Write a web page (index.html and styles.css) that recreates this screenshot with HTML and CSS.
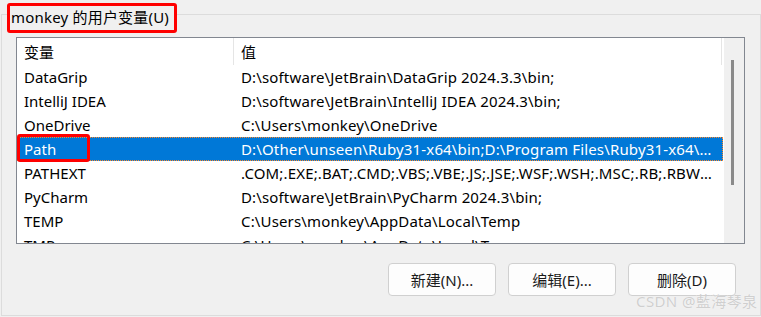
FILE: index.html
```html
<!DOCTYPE html>
<html lang="zh-CN">
<head>
  <meta charset="UTF-8">
  <title>环境变量</title>
  <link rel="stylesheet" href="styles.css">
</head>
<body>
  <div class="group">
    <div class="group-title">monkey 的用户变量(U)</div>

    <div class="listview">
      <div class="list-body">
        <div class="list-head">
          <div class="col-name">变量</div>
          <div class="col-value">值</div>
        </div>
        <div class="row"><div class="col-name">DataGrip</div><div class="col-value">D:\software\JetBrain\DataGrip 2024.3.3\bin;</div></div>
        <div class="row"><div class="col-name">IntelliJ IDEA</div><div class="col-value">D:\software\JetBrain\IntelliJ IDEA 2024.3\bin;</div></div>
        <div class="row"><div class="col-name">OneDrive</div><div class="col-value">C:\Users\monkey\OneDrive</div></div>
        <div class="row selected"><div class="col-name"><span class="mark">Path</span></div><div class="col-value">D:\Other\unseen\Ruby31-x64\bin;D:\Program Files\Ruby31-x64\bin;C:\Users\monkey\AppData\Local\Microsoft\WindowsApps</div></div>
        <div class="row"><div class="col-name">PATHEXT</div><div class="col-value">.COM;.EXE;.BAT;.CMD;.VBS;.VBE;.JS;.JSE;.WSF;.WSH;.MSC;.RB;.RBW;.PY</div></div>
        <div class="row"><div class="col-name">PyCharm</div><div class="col-value">D:\software\JetBrain\PyCharm 2024.3\bin;</div></div>
        <div class="row"><div class="col-name">TEMP</div><div class="col-value">C:\Users\monkey\AppData\Local\Temp</div></div>
        <div class="row"><div class="col-name">TMP</div><div class="col-value">C:\Users\monkey\AppData\Local\Temp</div></div>
      </div>
      <div class="scrollbar">
        <div class="thumb"></div>
      </div>
    </div>

    <div class="actions">
      <button type="button">新建(N)...</button>
      <button type="button">编辑(E)...</button>
      <button type="button">删除(D)</button>
    </div>
  </div>

  <div class="watermark">CSDN @藍海琴泉</div>
</body>
</html>
```

FILE: styles.css
```css
body {
  margin: 0;
  background: #f0f0f0;
  font-family: "Noto Sans", "Noto Sans CJK SC", sans-serif;
  font-size: 15px;
  color: #000;
  overflow: hidden;
}

.group {
  position: relative;
  margin: 14px 0 0 1px;
  width: 760px;
  height: 302px;
  border: 1px solid #dcdcdc;
  padding: 22px 0 0 14px;
  box-sizing: border-box;
}

.group-title {
  position: absolute;
  left: 5px;
  top: -12px;
  height: 24px;
  line-height: 23px;
  padding: 0 5px 0 1px;
  background: #f0f0f0;
  border: 3px solid #f00;
  border-radius: 3px;
  white-space: nowrap;
  letter-spacing: 0.2px;
}

.listview {
  display: flex;
  width: 729px;
  height: 207px;
  border: 1px solid #828790;
  box-sizing: border-box;
  background: #fff;
  overflow: hidden;
}

.list-body {
  flex: 1;
  overflow: hidden;
}

.list-head,
.row {
  display: flex;
  width: 706px;
}

.list-head {
  height: 27px;
  line-height: 28px;
}

.list-head .col-name,
.list-head .col-value {
  border-right: 1px solid #e5e5e5;
}

.row {
  height: 24px;
  line-height: 24px;
}

.col-name {
  width: 217px;
  padding-left: 7px;
  box-sizing: border-box;
  white-space: nowrap;
}

.col-value {
  width: 488px;
  padding: 0 7px;
  box-sizing: border-box;
  white-space: nowrap;
  overflow: hidden;
  text-overflow: ellipsis;
  letter-spacing: 0.15px;
}

.row.selected {
  background: #0078d7;
  color: #fff;
  outline: 1px dotted #ff8828;
  outline-offset: -1px;
}

.mark {
  position: relative;
}

.mark::after {
  content: "";
  position: absolute;
  left: -7px;
  top: -5px;
  width: 67px;
  height: 22px;
  border: 3px solid #f00;
  border-radius: 3px;
}

.scrollbar {
  width: 20px;
  margin-left: 1px;
  background: #f0f0f0;
  position: relative;
}

.thumb {
  position: absolute;
  left: 7px;
  top: 22px;
  width: 3px;
  height: 125px;
  background: #8a8a8a;
}

.actions {
  display: flex;
  justify-content: flex-end;
  gap: 12px;
  width: 720px;
  margin-top: 19px;
}

.actions button {
  width: 108px;
  height: 33px;
  background: #fdfdfd;
  border: 1px solid #d0d0d0;
  border-radius: 4px;
  font-family: "Noto Sans", "Noto Sans CJK SC", sans-serif;
  font-size: 15px;
  color: #1a1a1a;
  padding: 0;
}

.watermark {
  position: absolute;
  left: 636px;
  top: 290px;
  font-size: 15px;
  color: #cfcfcf;
  letter-spacing: 0.4px;
  text-shadow: 0 0 1px #fff;
}
```
